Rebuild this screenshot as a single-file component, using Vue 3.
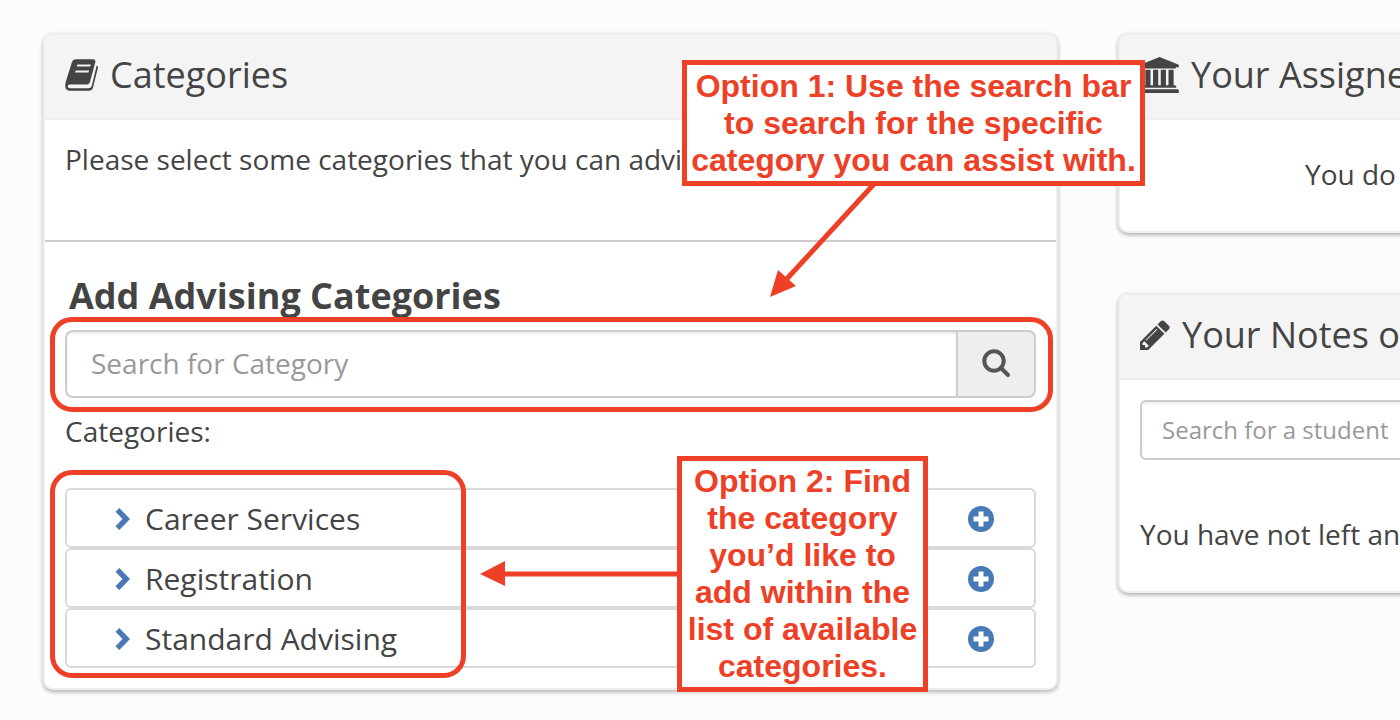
<script setup>
import { ref } from 'vue'

const search = ref('')
const student = ref('')
const opened = ref('')

const categories = ['Career Services', 'Registration', 'Standard Advising']

function toggle(name) {
  opened.value = opened.value === name ? '' : name
}
</script>

<template>
  <main class="page">
    <section class="card main-card">
      <header class="card-head">
        <svg class="icon book" viewBox="0 0 33 36" aria-hidden="true">
          <path d="M11 2.300H28Q31 2.300 30.300 5.300L25 24.800Q24.300 27.600 21.500 27.600H4.500Q2.600 27.600 2.700 29.300Q2.900 31.300 5 31.300H23.500Q26 31.300 26.800 28.800L31.700 8.500Q33.300 9.300 32.900 11L28 30.500Q27 33.700 24 33.700H4.500Q.200 33.500 .200 28.500Q.300 25 1.500 22.500L6.800 5.500Q8 2.300 11 2.300z" />
          <path class="cut" d="M12.400 7.500H25.800L25.200 9.500H11.800zM10.700 13.500H24.100L23.500 15.500H10.100z" />
        </svg>
        <h2>Categories</h2>
      </header>

      <p class="intro">Please select some categories that you can advi</p>

      <div class="add">
        <h3>Add Advising Categories</h3>

        <form class="search ring-wrap" @submit.prevent>
          <input v-model="search" type="text" placeholder="Search for Category" aria-label="Search for Category" />
          <button type="submit" aria-label="Search">
            <svg viewBox="0 0 30 30" aria-hidden="true">
              <circle cx="13" cy="12" r="9.700" />
              <path d="M20 19l7 7" />
            </svg>
          </button>
          <span class="ring"></span>
        </form>

        <p class="label">Categories:</p>

        <div class="ring-wrap">
          <ul class="list">
            <li v-for="name in categories" :key="name">
              <button class="expand" type="button" :aria-expanded="opened === name" @click="toggle(name)">
                <svg viewBox="0 0 16 22" aria-hidden="true">
                  <path d="M4.300 0L15 11 4.300 22 .5 18.200 7.500 11 .5 3.800z" />
                </svg>
                {{ name }}
              </button>
              <button class="plus" type="button" :aria-label="'Add ' + name">
                <svg viewBox="0 0 26 26" aria-hidden="true">
                  <circle cx="13" cy="13" r="13" />
                  <path d="M13 5.500v15M5.500 13h15" />
                </svg>
              </button>
            </li>
          </ul>
          <span class="ring ring-short"></span>
        </div>
      </div>
    </section>

    <aside class="side">
      <section class="card">
        <header class="card-head">
          <svg class="icon bank" viewBox="0 0 1920 1792" aria-hidden="true">
            <path d="M960 0l960 384v128h-128q0 26-20.500 45t-48.500 19h-1526q-28 0-48.500-19t-20.500-45h-128v-128zm-704 640h256v768h128v-768h256v768h128v-768h256v768h128v-768h256v768h59q28 0 48.500 19t20.500 45v64h-1664v-64q0-26 20.500-45t48.500-19h59v-768zm1595 960q28 0 48.500 19t20.500 45v128h-1920v-128q0-26 20.500-45t48.500-19h1782z" />
          </svg>
          <h2>Your Assigne</h2>
        </header>
        <p class="assigned">You do</p>
      </section>

      <section class="card">
        <header class="card-head">
          <svg class="icon pencil" viewBox="128 0 1536 1792" aria-hidden="true">
            <path d="M491 1536l91-91-235-235-91 91v107h128v128h107zm523-928q0-22-22-22-10 0-17 7l-542 542q-7 7-7 17 0 22 22 22 10 0 17-7l542-542q7-7 7-17zm-54-192l416 416-832 832h-416v-416zm683 96q0 53-37 90l-166 166-416-416 166-165q36-38 90-38 53 0 91 38l235 234q37 39 37 91z" />
          </svg>
          <h2>Your Notes o</h2>
        </header>
        <div class="notes">
          <input v-model="student" type="text" placeholder="Search for a student" aria-label="Search for a student" />
          <p>You have not left any</p>
        </div>
      </section>
    </aside>

    <!-- instruction layer -->
    <svg class="arrow arrow-one" viewBox="0 0 106 114" aria-hidden="true">
      <path class="line" d="M104 0L14 98" />
      <path class="tip" d="M0 113L8 86 26 102z" />
    </svg>
    <p class="callout callout-one">
      Option 1: Use the search bar<br />
      to search for the specific<br />
      category you can assist with.
    </p>

    <svg class="arrow arrow-two" viewBox="0 0 198 26" aria-hidden="true">
      <path class="line" d="M20 13H198" />
      <path class="tip" d="M0 13L25 0V25z" />
    </svg>
    <p class="callout callout-two">
      Option 2: Find<br />
      the category<br />
      you’d like to<br />
      add within the<br />
      list of available<br />
      categories.
    </p>
  </main>
</template>

<style>
body {
  margin: 0;
  background: #fcfcfc;
}
</style>

<style scoped>
* {
  box-sizing: border-box;
}

.page {
  position: relative;
  display: grid;
  grid-template-columns: minmax(0, 1015fr) minmax(0, 282fr);
  gap: 60px;
  align-items: start;
  min-height: 100vh;
  padding: 33px 0 30px 43px;
  overflow: hidden;
  color: #444;
  font-family: "Open Sans", sans-serif;
  font-size: 28px;
  line-height: 40px;
}

h2,
h3,
p,
ul {
  margin: 0;
  padding: 0;
}

input,
button {
  font-family: inherit;
  color: inherit;
}

.card {
  border: 2px solid #eee;
  border-radius: 10px;
  background: white;
  box-shadow: 0 2px 4px rgba(0, 0, 0, 0.3);
}

.card-head {
  display: flex;
  align-items: center;
  gap: 12px;
  padding: 15px 20px 18px;
  border-bottom: 2px solid #eee;
  border-radius: 8px 8px 0 0;
  background: #f4f4f4;
}

h2,
h3 {
  font-size: 36px;
  line-height: 50px;
  white-space: nowrap;
}

h2 {
  font-weight: normal;
}

.icon {
  flex: none;
  height: 36px;
  fill: #444;
}

.icon .cut {
  fill: #f4f4f4;
}

.book {
  width: 33px;
}

.bank {
  width: 39px;
}

.pencil {
  width: 30px;
}

.intro {
  padding: 19px 20px 61px;
  border-bottom: 2px solid #ccc;
  white-space: nowrap;
  overflow: hidden;
}

.add {
  padding: 29px 20px 20px;
}

h3 {
  padding-left: 4px;
  margin-bottom: 9px;
}

.ring-wrap {
  position: relative;
}

.ring {
  position: absolute;
  inset: -13px -17px -14px -15px;
  border: 5px solid #ee4026;
  border-radius: 22px;
  pointer-events: none;
}

.ring-short {
  inset: -18px 570px -10px -15px;
}

.search {
  display: flex;
  height: 68px;
}

.search input {
  flex: 1;
  min-width: 0;
  padding: 0 24px 2px;
  border: 2px solid #ccc;
  border-right: none;
  border-radius: 8px 0 0 8px;
  background: white;
  box-shadow: inset 0 2px 2px rgba(0, 0, 0, 0.08);
  font-size: 28px;
}

input::placeholder {
  color: #999;
  opacity: 1;
}

.search button {
  width: 80px;
  padding: 0;
  border: 2px solid #ccc;
  border-radius: 0 8px 8px 0;
  background: #eee;
}

.search svg {
  display: block;
  width: 30px;
  height: 30px;
  margin: auto;
  fill: none;
  stroke: #555;
  stroke-width: 4;
  stroke-linecap: round;
}

.label {
  margin: 13px 0 37px;
}

.list {
  list-style: none;
}

.list li {
  display: flex;
  align-items: center;
  justify-content: space-between;
  height: 60px;
  padding: 2px 40px 0 48px;
  border: 2px solid #d9d9d9;
  border-radius: 6px;
}

.list button {
  display: flex;
  align-items: center;
  padding: 0;
  border: none;
  background: none;
  cursor: pointer;
}

.expand {
  gap: 14px;
  font-size: 30px;
  line-height: 40px;
}

.expand svg {
  width: 16px;
  height: 22px;
  fill: #4679b6;
}

.plus svg {
  width: 26px;
  height: 26px;
  fill: #4679b6;
  stroke: none;
}

.plus path {
  stroke: white;
  stroke-width: 5;
  stroke-linecap: butt;
}

.side {
  display: grid;
  gap: 60px;
  margin-right: -24px;
}

.assigned {
  padding: 34px 20px 37px 185px;
  white-space: nowrap;
}

.notes {
  padding: 20px 20px 37px;
  white-space: nowrap;
}

.notes input {
  display: block;
  width: 100%;
  height: 60px;
  margin-bottom: 54px;
  padding: 0 20px 2px;
  border: 2px solid #ccc;
  border-radius: 6px;
  background: white;
  box-shadow: inset 0 2px 2px rgba(0, 0, 0, 0.08);
  font-size: 24px;
}

.callout {
  position: absolute;
  border: 5px solid #ee4026;
  background: white;
  color: #ee4026;
  font-family: "Liberation Sans", Arial, sans-serif;
  font-size: 32px;
  font-weight: bold;
  line-height: 37px;
  text-align: center;
  white-space: nowrap;
}

.callout-one {
  top: 60px;
  left: 682px;
  width: 463px;
  padding: 3px 0 2px;
}

.callout-two {
  top: 456px;
  left: 677px;
  width: 251px;
  padding: 2px 0;
}

.arrow {
  position: absolute;
}

.arrow .line {
  fill: none;
  stroke: #ee4026;
  stroke-width: 5;
}

.arrow .tip {
  fill: #ee4026;
}

.arrow-one {
  top: 184px;
  left: 770px;
  width: 106px;
  height: 114px;
}

.arrow-two {
  top: 561px;
  left: 480px;
  width: 198px;
  height: 26px;
}
</style>
